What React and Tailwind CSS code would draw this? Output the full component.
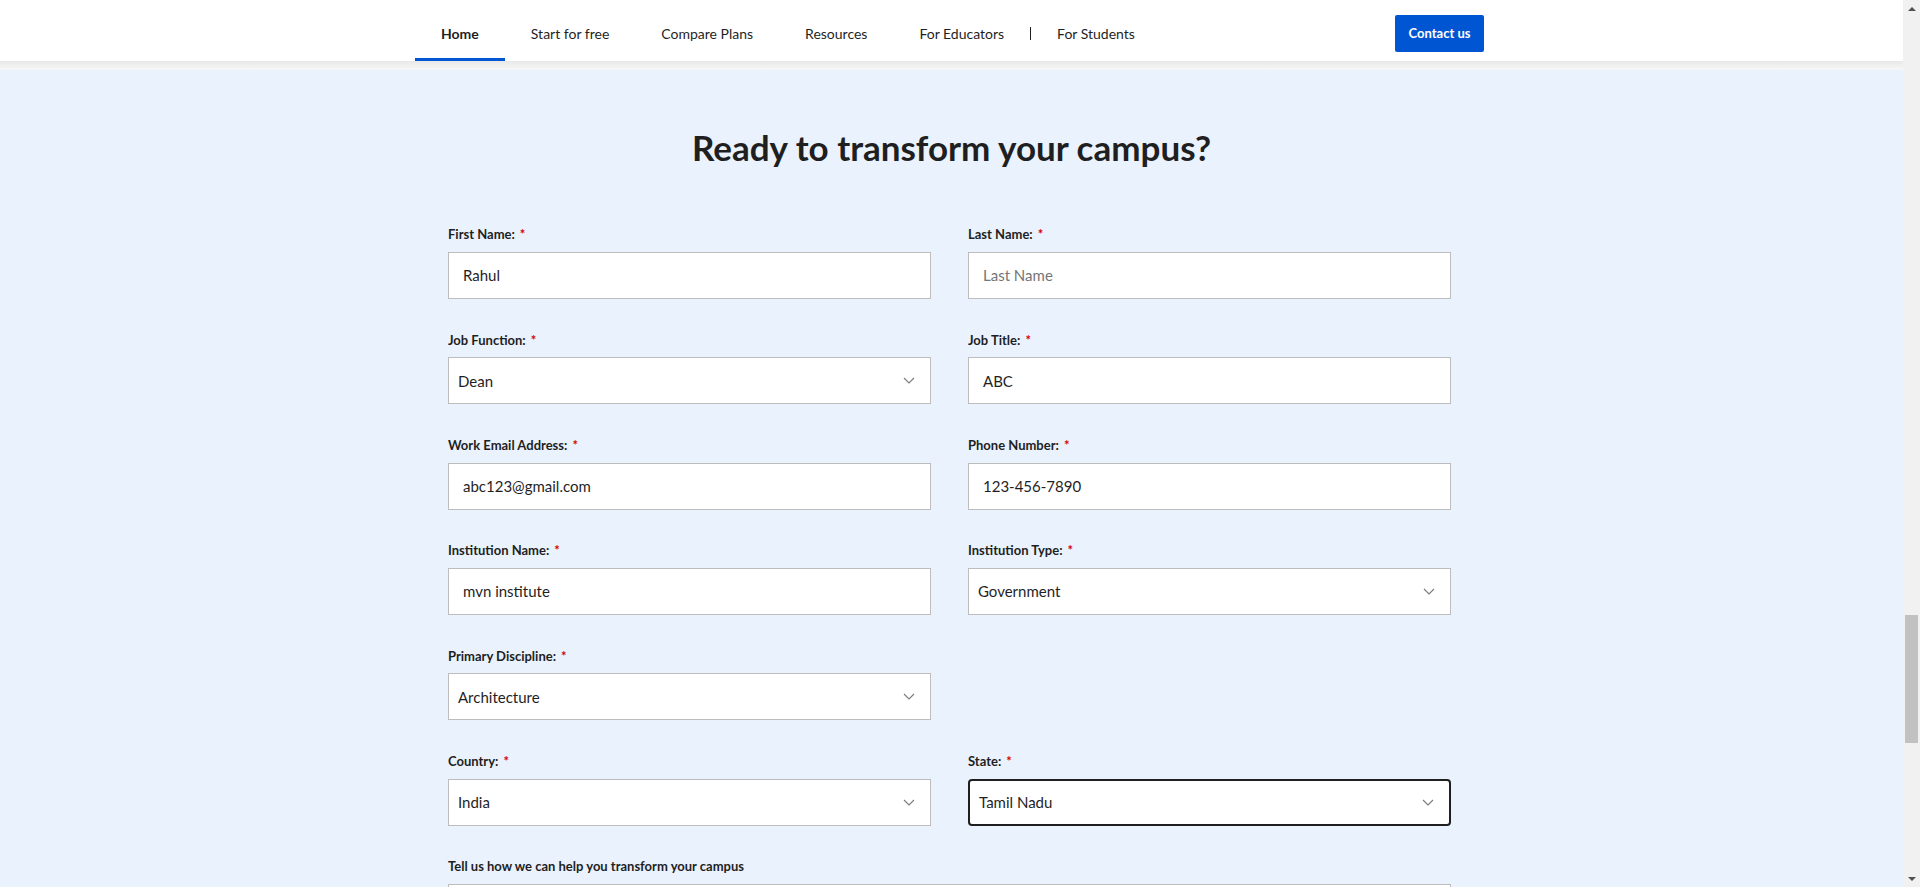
const navItems = ["Home", "Start for free", "Compare Plans", "Resources", "For Educators"];

const fields = [
  { label: "First Name:", value: "Rahul" },
  { label: "Last Name:", placeholder: "Last Name" },
  { label: "Job Function:", value: "Dean", select: true },
  { label: "Job Title:", value: "ABC" },
  { label: "Work Email Address:", value: "abc123@gmail.com" },
  { label: "Phone Number:", value: "123-456-7890" },
  { label: "Institution Name:", value: "mvn institute" },
  { label: "Institution Type:", value: "Government", select: true },
  { label: "Primary Discipline:", value: "Architecture", select: true },
  { empty: true },
  { label: "Country:", value: "India", select: true },
  { label: "State:", value: "Tamil Nadu", select: true, focused: true },
];

const Chevron = () => (
  <svg width="12" height="7" viewBox="0 0 12 7" fill="none" stroke="#7a7a7a" strokeWidth="1.1">
    <path d="M1 1l5 5 5-5" />
  </svg>
);

const Field = ({ field }) => {
  if (field.empty) return <div />;
  const box = field.focused
    ? "border-2 border-[#1f1f1f] rounded-[4px] pl-[9px]"
    : field.select
    ? "border border-[#bdbdbd] pl-[9px]"
    : "border border-[#bdbdbd] pl-[14px]";
  return (
    <div className="flex flex-col">
      <div className="mt-[1px] mb-[8px] flex h-[18px] items-center text-[13px] font-bold text-[#1f1f1f]">
        {field.label}
        <span className="ml-[5px] text-[#d30001]">*</span>
      </div>
      <div className={`flex h-[47px] items-center justify-between bg-white pr-[15px] text-[15px] ${box}`}>
        {field.placeholder ? (
          <span className="text-[#757575]">{field.placeholder}</span>
        ) : (
          <span className="text-[#1f1f1f]">{field.value}</span>
        )}
        {field.select && <Chevron />}
      </div>
    </div>
  );
};

export default function App() {
  return (
    <div className="flex h-[887px] w-[1920px] overflow-hidden font-['Lato',sans-serif]">
      <div className="min-w-0 flex-1 bg-[#eaf2fd]">
        <header className="h-[61px] bg-white">
          <div className="mx-auto flex h-full w-[1073px] items-center justify-between pr-[4px] pt-[6px]">
            <nav className="flex h-full items-stretch text-[14px] text-[#1f1f1f]">
              {navItems.map((item, i) => (
                <div
                  key={item}
                  className={`flex items-center px-[26px] ${
                    i === 0 ? "border-b-[3px] border-[#0056d2] pt-[3px] font-bold" : ""
                  }`}
                >
                  {item}
                </div>
              ))}
              <div className="flex items-center">
                <div className="h-[13px] w-px bg-[#1f1f1f]" />
              </div>
              <div className="flex items-center px-[26px]">For Students</div>
            </nav>
            <button className="h-[37px] w-[89px] rounded-[2px] bg-[#0056d2] text-[13px] font-bold text-white">
              Contact us
            </button>
          </div>
        </header>
        <div className="h-[9px] bg-gradient-to-b from-[#e8e8e8] to-[#f8f8f8]" />

        <h1 className="pt-[55px] text-center text-[35px] font-bold leading-[44px] text-[#1f1f1f]">
          Ready to transform your campus?
        </h1>

        <div className="mx-auto mt-[56px] w-[1007px] pr-[4px]">
          <div className="grid grid-cols-2 gap-x-[37px] gap-y-[31.33px]">
            {fields.map((f, i) => (
              <Field key={i} field={f} />
            ))}
            <div className="col-span-2 flex flex-col">
              <div className="mt-[1px] mb-[8px] flex h-[18px] items-center text-[13px] font-bold text-[#1f1f1f]">
                Tell us how we can help you transform your campus
              </div>
              <div className="h-[120px] border border-[#bdbdbd] bg-white" />
            </div>
          </div>
        </div>
      </div>

      <div className="flex w-[17px] shrink-0 flex-col bg-[#f1f1f1]">
        <div className="flex h-[17px] shrink-0 items-center justify-center">
          <div className="h-0 w-0 border-x-[4px] border-b-[4px] border-x-transparent border-b-[#505050]" />
        </div>
        <div className="h-[598px] shrink-0" />
        <div className="mx-[2px] h-[128px] shrink-0 bg-[#c1c1c1]" />
        <div className="flex-1" />
        <div className="flex h-[17px] shrink-0 items-center justify-center">
          <div className="h-0 w-0 border-x-[4px] border-t-[4px] border-x-transparent border-t-[#505050]" />
        </div>
      </div>
    </div>
  );
}
